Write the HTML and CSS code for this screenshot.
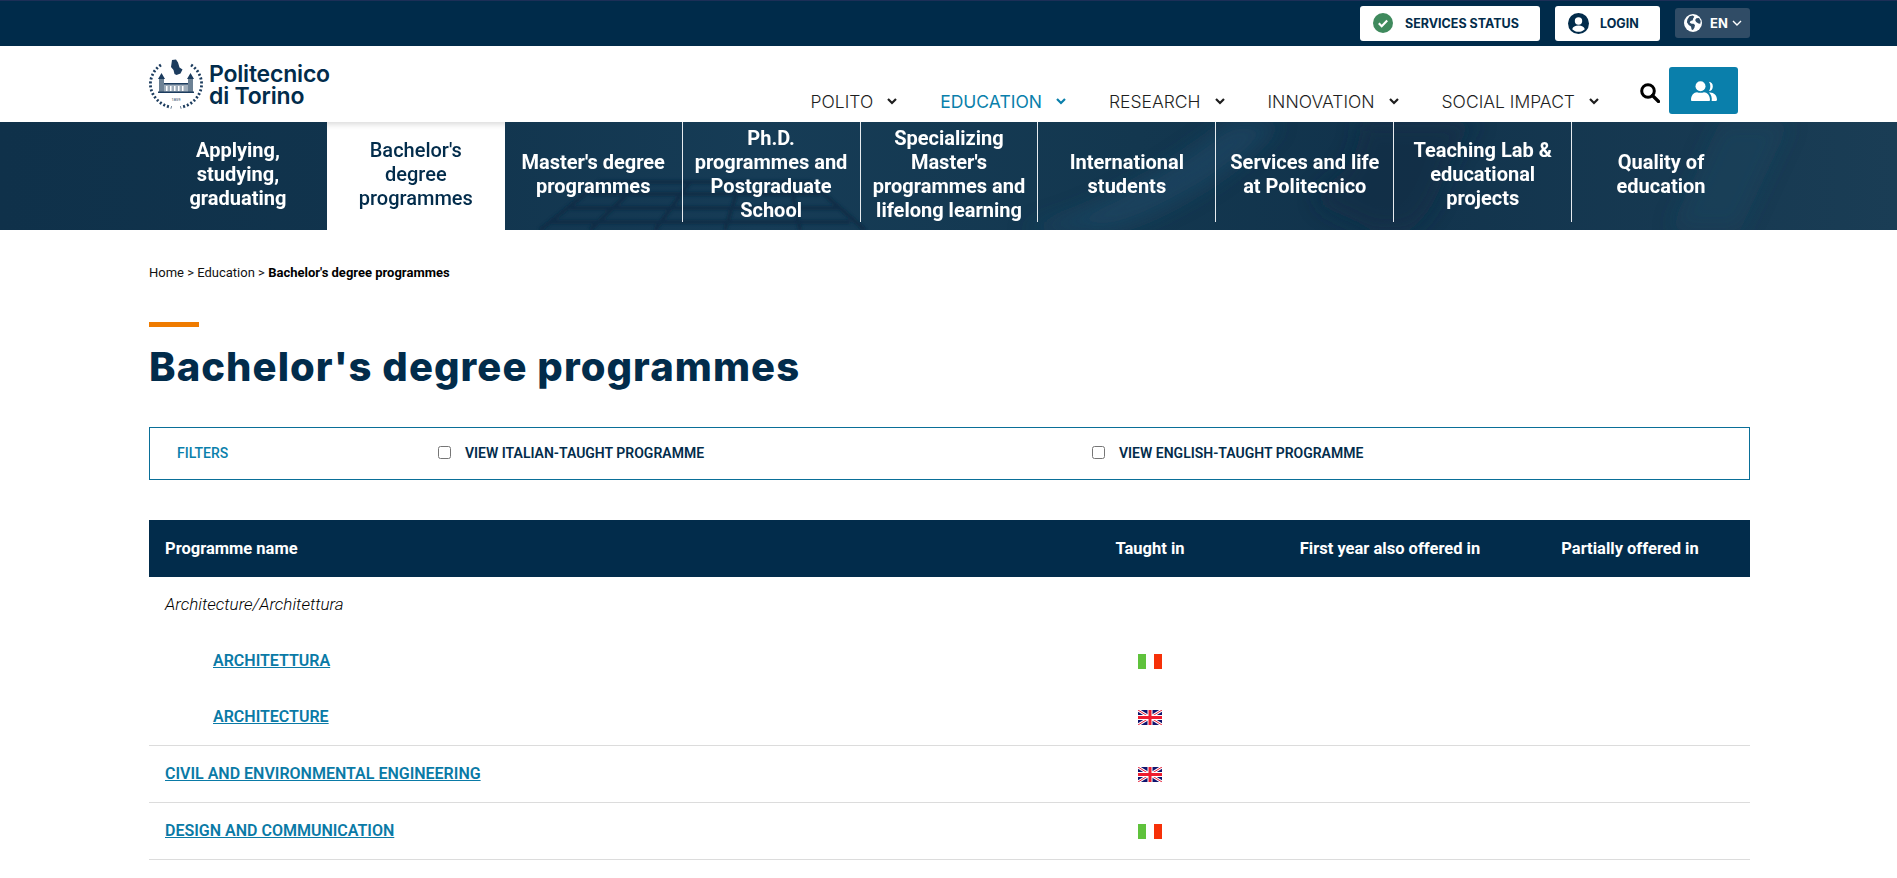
FILE: index.html
```html
<!DOCTYPE html>
<html lang="en">
<head>
<meta charset="utf-8">
<title>Bachelor's degree programmes</title>
<link rel="stylesheet" href="styles.css">
</head>
<body>
<div class="topbar">
  <div class="wrap topbar-in">
    <a class="top-btn btn-status">
      <svg class="ic20" viewBox="0 0 20 20"><circle cx="10" cy="10" r="10" fill="#3f8a5d"/><path d="M5.8 10.3l2.9 2.9 5.5-5.6" fill="none" stroke="#fff" stroke-width="2.2"/></svg>
      <span>SERVICES STATUS</span>
    </a>
    <a class="top-btn btn-login">
      <svg class="ic21" viewBox="0 0 21 21"><circle cx="10.5" cy="10.5" r="10.5" fill="#022c4b"/><circle cx="10.5" cy="8" r="3.7" fill="#fff"/><path d="M4.2 16.2c.7-2.6 2.9-3.8 6.3-3.8s5.600 1.200 6.300 3.800c-1.700 1.700-3.900 2.600-6.300 2.600s-4.600-.9-6.300-2.600z" fill="#fff"/></svg>
      <span>LOGIN</span>
    </a>
    <a class="lang">
      <svg class="ic18" viewBox="0 0 18 18"><circle cx="9" cy="9" r="9" fill="#fff"/><path d="M5.500 2.200l3.300-.7 1.500 1.300-1.300 1.900-.2 1.600-2.300.8-.8 1.700 2 1 1.800 0 1.500 1.300-.6 2.600-1.500 2.300-1.300-.5-.6-3-2.300-1.400-1.800-2.900.5-2.700z" fill="#304c66"/><path d="M12.300 4.300l2.700-.3 1.700 3-.4 2.700-1.800-.2-2.400-1.600-1-2z" fill="#304c66"/></svg>
      <span>EN</span>
      <svg class="chev-lang" viewBox="0 0 10 6"><path d="M1 1l4 4 4-4" fill="none" stroke="#fff" stroke-width="1.400"/></svg>
    </a>
  </div>
</div>

<header class="header">
  <div class="wrap header-in">
    <a class="logo">
      <svg class="seal" viewBox="0 0 54 50">
        <g fill="none" stroke="#1c3c5e">
          <path d="M12 6C4 11 .8 20 1.500 27c1 10 9 19 21 21.500" stroke-width="2.800" stroke-dasharray="2 2"/>
          <path d="M42 6c8 5 11.200 14 10.500 21-1 10-9 19-21 21.500" stroke-width="2.800" stroke-dasharray="2 2"/>
        </g>
        <path d="M23 1l4-.5 2 3 1.500 5 3 2-2 4-4 1.500-2-1-1-4-2.500-3z" fill="#1c3c5e"/>
        <path d="M9 20l3.500-6 3.500 6z M38 20l3.500-6 3.500 6z" fill="#1c3c5e"/>
        <path d="M10 20h5v13h-5z M39 20h5v13h-5z" fill="#6d8295"/>
        <path d="M15 25h24v8H15z" fill="#9fadba"/>
        <path d="M15 24h24v1.500H15z M9 32.500h36V34H9z" fill="#1c3c5e"/>
        <path d="M17 27h1.500v5H17z M21 27h1.500v5H21z M25 27h1.500v5H25z M29 27h1.500v5H29z M33 27h1.500v5H33z" fill="#fff"/>
        <text class="seal-year" x="27" y="42" text-anchor="middle">1859</text>
      </svg>
      <span class="logo-text">Politecnico<br>di Torino</span>
    </a>
    <nav class="mainnav">
      <a class="nav-item">POLITO<svg class="chev" viewBox="0 0 10 7"><path d="M1 1l4 4 4-4" fill="none" stroke="currentColor" stroke-width="2.200"/></svg></a>
      <a class="nav-item current">EDUCATION<svg class="chev" viewBox="0 0 10 7"><path d="M1 1l4 4 4-4" fill="none" stroke="currentColor" stroke-width="2.200"/></svg></a>
      <a class="nav-item">RESEARCH<svg class="chev" viewBox="0 0 10 7"><path d="M1 1l4 4 4-4" fill="none" stroke="currentColor" stroke-width="2.200"/></svg></a>
      <a class="nav-item">INNOVATION<svg class="chev" viewBox="0 0 10 7"><path d="M1 1l4 4 4-4" fill="none" stroke="currentColor" stroke-width="2.200"/></svg></a>
      <a class="nav-item">SOCIAL IMPACT<svg class="chev" viewBox="0 0 10 7"><path d="M1 1l4 4 4-4" fill="none" stroke="currentColor" stroke-width="2.200"/></svg></a>
    </nav>
    <svg class="search" viewBox="0 0 20 20"><circle cx="8" cy="8" r="6.300" fill="none" stroke="#000" stroke-width="3"/><path d="M12.500 12.500l6 6" stroke="#000" stroke-width="3.200" stroke-linecap="round"/></svg>
    <a class="people">
      <svg class="ic-people" viewBox="0 0 26 20"><circle cx="9.500" cy="5.200" r="5" fill="#fff"/><path d="M17.800 .8a4.700 4.700 0 0 1 0 9.300c1-1.200 1.500-2.800 1.500-4.700s-.5-3.400-1.500-4.600z" fill="#fff"/><path d="M0 19c0-5 3-7.800 6-7.800 2 .8 5 .8 7 0 3 0 6 2.800 6 7.800 0 .5-.5 1-1 1H1c-.5 0-1-.5-1-1z" fill="#fff"/><path d="M19 11.500c4 0 7 3 7 7.300 0 .7-.5 1.200-1 1.200h-4.300c.4-3.500-.4-6.300-2.700-8.500z" fill="#fff"/></svg>
    </a>
  </div>
</header>

<div class="tabs-band">
  <svg class="band-art" viewBox="0 0 1897 108" preserveAspectRatio="none">
    <defs>
      <linearGradient id="bandglow" x1="0" x2="1" y1="0" y2="0">
        <stop offset="0" stop-color="#0f314a"/><stop offset=".22" stop-color="#11344d"/><stop offset=".4" stop-color="#163c56"/><stop offset=".6" stop-color="#13374f"/><stop offset=".72" stop-color="#11334c"/><stop offset="1" stop-color="#1a3d55"/>
      </linearGradient>
      <filter id="soft" x="-10%" y="-30%" width="120%" height="160%"><feGaussianBlur stdDeviation="1.500"/></filter>
      <filter id="softer" x="-10%" y="-30%" width="120%" height="160%"><feGaussianBlur stdDeviation="10"/></filter>
    </defs>
    <rect width="1897" height="108" fill="url(#bandglow)"/>
    <g fill="none" stroke="#0d2c45" stroke-width="4" opacity=".85" filter="url(#soft)">
      <path d="M540 108L600 60h210l55 48"/><path d="M590 72h230M570 86h270M550 100h300"/>
      <path d="M640 60l-50 48M690 60l-35 48M740 60l-15 48M790 60l10 48"/>
    </g>
    <g filter="url(#softer)">
      <path d="M1020 108C1100 90 1180 40 1230 0h50c-40 50-120 95-170 108z" fill="#214d6a" opacity=".55"/>
      <path d="M1360 0h120c-40 30-30 80-70 108h-40c-30-20-60-20-50-40 20-15 40-30 40-68z" fill="#0c2d46" opacity=".6"/>
      <path d="M1720 0h70l-50 108h-70z" fill="#234a63" opacity=".35"/>
    </g>
  </svg>
  <div class="wrap tabs">
    <a class="tab"><span class="tab-in">Applying, studying, graduating</span></a>
    <a class="tab active"><span class="tab-in">Bachelor's degree programmes</span></a>
    <a class="tab sep"><span class="tab-in">Master's degree programmes</span></a>
    <a class="tab sep"><span class="tab-in">Ph.D. programmes and Postgraduate School</span></a>
    <a class="tab sep"><span class="tab-in">Specializing Master's programmes and lifelong learning</span></a>
    <a class="tab sep"><span class="tab-in">International students</span></a>
    <a class="tab sep"><span class="tab-in">Services and life at Politecnico</span></a>
    <a class="tab sep"><span class="tab-in">Teaching Lab &amp; educational projects</span></a>
    <a class="tab"><span class="tab-in">Quality of education</span></a>
  </div>
</div>

<main class="wrap content">
  <p class="crumbs">Home &gt; Education &gt; <strong>Bachelor's degree programmes</strong></p>
  <div class="accent"></div>
  <h1 class="title">Bachelor's degree programmes</h1>

  <form class="filters">
    <span class="filters-title">FILTERS</span>
    <label class="filter"><input type="checkbox"><span>VIEW ITALIAN-TAUGHT PROGRAMME</span></label>
    <label class="filter"><input type="checkbox"><span>VIEW ENGLISH-TAUGHT PROGRAMME</span></label>
  </form>

  <table class="programmes">
    <thead>
      <tr><th class="col-name">Programme name</th><th class="col-lang">Taught in</th><th class="col-lang">First year also offered in</th><th class="col-lang">Partially offered in</th></tr>
    </thead>
    <tbody>
      <tr class="group"><td class="group-name">Architecture/Architettura</td><td></td><td></td><td></td></tr>
      <tr class="group"><td class="nested"><a class="prog">ARCHITETTURA</a></td><td class="flag-cell"><svg class="flag" viewBox="0 0 24 15"><rect width="8" height="15" fill="#5fc23c"/><rect x="16" width="8" height="15" fill="#f63108"/></svg></td><td></td><td></td></tr>
      <tr><td class="nested"><a class="prog">ARCHITECTURE</a></td><td class="flag-cell"><svg class="flag" viewBox="0 0 24 15"><rect width="24" height="15" fill="#10146e"/><path d="M0 0l24 15M24 0L0 15" stroke="#fff" stroke-width="3"/><path d="M0 0l24 15M24 0L0 15" stroke="#e8203a" stroke-width="1"/><path d="M12 0v15M0 7.500h24" stroke="#fff" stroke-width="5"/><path d="M12 0v15M0 7.500h24" stroke="#ef1c2e" stroke-width="3"/></svg></td><td></td><td></td></tr>
      <tr><td><a class="prog">CIVIL AND ENVIRONMENTAL ENGINEERING</a></td><td class="flag-cell"><svg class="flag" viewBox="0 0 24 15"><rect width="24" height="15" fill="#10146e"/><path d="M0 0l24 15M24 0L0 15" stroke="#fff" stroke-width="3"/><path d="M0 0l24 15M24 0L0 15" stroke="#e8203a" stroke-width="1"/><path d="M12 0v15M0 7.500h24" stroke="#fff" stroke-width="5"/><path d="M12 0v15M0 7.500h24" stroke="#ef1c2e" stroke-width="3"/></svg></td><td></td><td></td></tr>
      <tr><td><a class="prog">DESIGN AND COMMUNICATION</a></td><td class="flag-cell"><svg class="flag" viewBox="0 0 24 15"><rect width="8" height="15" fill="#5fc23c"/><rect x="16" width="8" height="15" fill="#f63108"/></svg></td><td></td><td></td></tr>
    </tbody>
  </table>
</main>
</body>
</html>
```
FILE: styles.css
```css
* { box-sizing: border-box; }
html, body { margin: 0; padding: 0; }
body { background: #fff; color: #000; font-family: "Roboto", "Liberation Sans", sans-serif; overflow-x: hidden; }
a { color: inherit; text-decoration: none; }
.wrap { width: 1601px; margin-left: 149px; }

/* top bar */
.topbar { height: 46px; background: #002b4a; border-top: 1px solid #1c2f57; }
.topbar-in { height: 45px; display: flex; justify-content: flex-end; align-items: center; gap: 15px; padding-bottom: 1px; }
.top-btn { height: 35px; background: #fff; border-radius: 3px; display: flex; align-items: center; font-family: "Inter", sans-serif; font-weight: 700; font-size: 12.500px; color: #022c4b; }
.btn-status { width: 180px; padding-left: 13px; gap: 12px; }
.btn-login { width: 105px; padding-left: 13px; gap: 11px; }
.ic20 { width: 20px; height: 20px; }
.ic21 { width: 21px; height: 21px; }
.ic18 { width: 18px; height: 18px; }
.lang { width: 75px; height: 30px; background: #304c66; border-radius: 3px; display: flex; align-items: center; padding-left: 9px; gap: 8px; color: #fff; font-family: "Inter", sans-serif; font-weight: 700; font-size: 13px; }
.chev-lang { width: 10px; height: 6px; margin-left: -4px; }

/* header */
.header { height: 76px; background: #fff; }
.header-in { height: 76px; display: flex; padding-right: 12px; }
.logo { display: flex; align-items: flex-start; padding-top: 13px; color: #022c4b; }
.seal { width: 54px; height: 50px; }
.seal-year { font-family: "Roboto", sans-serif; font-size: 4px; fill: #1c3c5e; }
.logo-text { margin-left: 6px; margin-top: 5px; font-family: "Inter", sans-serif; font-weight: 600; font-size: 23px; line-height: 21.500px; letter-spacing: -.2px; }
.mainnav { display: flex; margin-left: auto; padding-top: 44px; height: 76px; }
.nav-item { display: flex; align-items: flex-start; white-space: nowrap; font-family: "Inter", sans-serif; font-weight: 300; font-size: 17.500px; line-height: 24px; color: #1e1e1e; margin-right: 43px; }
.nav-item:last-child { margin-right: 0; }
.nav-item.current { color: #0a7fab; font-weight: 400; }
.chev { width: 10px; height: 7px; margin-left: 14px; margin-top: 8px; }
.search { width: 20px; height: 20px; margin-top: 37px; margin-left: 41px; }
.people { width: 69px; height: 47px; margin-top: 21px; margin-left: 9px; background: #0a7fab; border-radius: 3px; display: flex; align-items: center; justify-content: center; }
.ic-people { width: 26px; height: 20px; }

/* tabs */
.tabs-band { height: 108px; position: relative; background: #12344e; }
.band-art { position: absolute; inset: 0; width: 100%; height: 100%; }
.tabs { display: grid; grid-template-columns: repeat(9, 1fr); height: 108px; position: relative; }
.tab { display: block; padding-bottom: 8px; color: #fff; }
.tab-in { display: flex; height: 100px; align-items: center; justify-content: center; text-align: center; padding: 3px 10px 0; font-size: 20px; font-weight: 700; line-height: 24px; }
.tab.sep .tab-in { border-right: 1px solid #e6ebef; }
.tab.active { background: #fff; color: #022c4b; box-shadow: inset 0 7px 6px -5px rgba(0,0,0,.16); }
.tab.active .tab-in { font-weight: 500; padding-left: 24px; padding-right: 24px; }

/* content */
.crumbs { margin: 0; padding-top: 35px; font-size: 13px; line-height: 16px; color: #111; }
.crumbs strong { font-weight: 700; color: #000; }
.accent { width: 50px; height: 5px; background: #ef7b00; margin-top: 41px; }
.title { margin: 17px 0 0; font-family: "Inter", sans-serif; font-weight: 800; font-size: 40px; line-height: 46px; letter-spacing: 1.060px; color: #022c4b; }
.filters { height: 53px; margin-top: 37px; border: 1px solid #0a6f98; display: grid; grid-template-columns: 261px 654px 1fr; align-items: center; padding: 0 0 2px 27px; }
.filters-title { font-size: 14px; font-weight: 500; color: #0a7fab; }
.filter { display: flex; align-items: center; gap: 14px; font-size: 14px; font-weight: 600; color: #022c4b; }
.filter input { margin: 0; width: 13px; height: 13px; }

/* table */
.programmes { width: 100%; margin-top: 40px; border-collapse: collapse; table-layout: fixed; }
.programmes th { height: 57px; background: #022c4b; color: #fff; font-size: 16.500px; font-weight: 700; text-align: center; padding: 0; }
.programmes th.col-name { text-align: left; padding-left: 16px; }
.col-lang { width: 240px; }
.programmes td { height: 57px; padding: 0 0 0 16px; border-bottom: 1px solid #dcdcdc; font-size: 16px; }
.programmes tr.group td { height: 56px; border-bottom: 0; }
.programmes tr.group:first-child td { height: 55px; }
.programmes td.group-name { font-style: italic; font-weight: 300; font-size: 17px; color: #000; padding-bottom: 2px; }
.programmes td.nested { padding-left: 64px; }
.prog { color: #0a7aa6; font-weight: 600; text-decoration: underline; }
.programmes td.flag-cell { text-align: center; padding: 0; }
.flag { display: inline-block; width: 24px; height: 15px; vertical-align: middle; }
```
